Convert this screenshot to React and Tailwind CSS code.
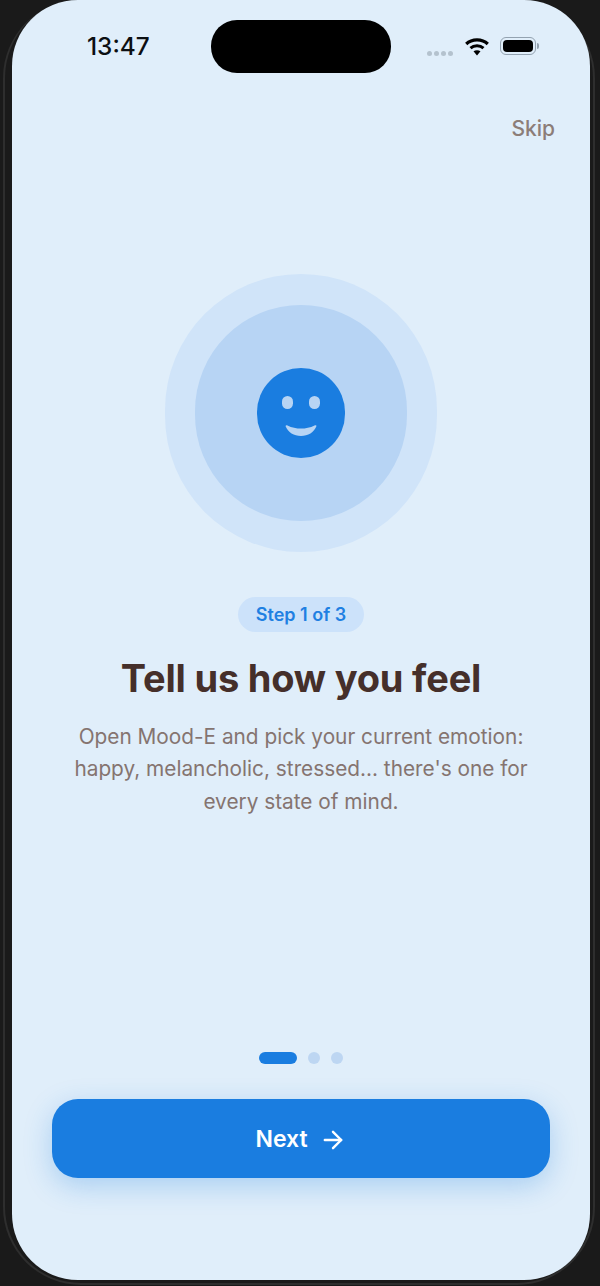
import { ArrowRight } from 'lucide-react';

const App = () => {
  return (
    <div className="w-[600px] h-[1286px] bg-[#1a1a1a] pl-[3px] pr-[5px] pb-[1px] overflow-hidden" style={{ fontFamily: 'Inter, sans-serif' }}>
      {/* Marco del teléfono */}
      <div className="h-full border-l-2 border-r-2 border-b-2 border-[#2e2e2e] rounded-[78px] pl-[7px] pr-[3px] pb-[3px]">
        <div className="h-full bg-[#e0eefa] rounded-[66px] flex flex-col">
          {/* Barra de estado */}
          <div className="h-[93px] shrink-0 flex items-start pt-[20px] pl-[75px]">
            <span className="w-[124px] text-[24.4px] leading-[53px] font-medium text-[#0c0f12]">13:47</span>
            <div className="w-[180px] h-[53px] bg-black rounded-[26px]"></div>
            <div className="h-[53px] flex items-center">
              <div className="ml-[36px] flex gap-[2px] mt-[13px]">
                <span className="w-[5px] h-[5px] rounded-full bg-[#b4c2ce]"></span>
                <span className="w-[5px] h-[5px] rounded-full bg-[#b4c2ce]"></span>
                <span className="w-[5px] h-[5px] rounded-full bg-[#b4c2ce]"></span>
                <span className="w-[5px] h-[5px] rounded-full bg-[#b4c2ce]"></span>
              </div>
              <svg width="24" height="19" viewBox="0 0 24 19" className="ml-[12px] mt-[-1px]">
                <path d="M1.200 7C7 1.500 17 1.500 22.800 7" fill="none" stroke="black" strokeWidth="3.200" />
                <path d="M5.500 11.200C9 8 15 8 18.500 11.200" fill="none" stroke="black" strokeWidth="3" />
                <path d="M8.500 14.200C10.500 12.800 13.500 12.800 15.500 14.200L12 18.500Z" fill="black" />
              </svg>
              <div className="flex items-center ml-[11px] mt-[-1px]">
                <div className="w-[36px] h-[18px] rounded-[6px] border border-[#93a2b0] p-[2px]">
                  <div className="w-full h-full bg-black rounded-[4px]"></div>
                </div>
                <div className="ml-[1px] w-[2px] h-[6px] bg-[#93a2b0] rounded-r-sm"></div>
              </div>
            </div>
          </div>

          {/* Skip */}
          <div className="flex justify-end pr-[35px] mt-[22px]">
            <span className="text-[21px] leading-[28px] font-medium text-[#8c7d78]">Skip</span>
          </div>

          {/* Contenido */}
          <div className="flex flex-col items-center mt-[131px]">
            <div className="w-[272px] h-[278px] rounded-full bg-[#d0e4f9] flex items-center justify-center">
              <div className="w-[212px] h-[216px] rounded-full bg-[#b7d4f4] flex items-center justify-center">
                <div className="w-[88px] h-[90px] rounded-full bg-[#1a7de0] flex flex-col items-center">
                  <div className="flex gap-[16px] mt-[28px]">
                    <span className="w-[11px] h-[13px] rounded-full bg-[#b7d4f4]"></span>
                    <span className="w-[11px] h-[13px] rounded-full bg-[#b7d4f4]"></span>
                  </div>
                  <svg width="34" height="13" viewBox="0 0 34 13" className="mt-[15px]">
                    <path d="M1.500 2C2 1 2.500 1 3.500 1.400C12 5.600 22 5.600 30.500 1.400C31.500 1 32.500 1 32.500 2C30 8.500 24 12 17 12C10 12 4 8.500 1.500 2Z" fill="#b7d4f4" />
                  </svg>
                </div>
              </div>
            </div>

            <div className="mt-[45px] h-[35px] px-[18px] rounded-full bg-[#cce2fa] flex items-center text-[18px] font-semibold text-[#1f80e2]">
              Step 1 of 3
            </div>

            <h1 className="mt-[22px] text-[38px] leading-[48px] font-bold text-[#452f2a] tracking-[-0.2px]">Tell us how you feel</h1>

            <p className="mt-[19px] w-[470px] text-center text-[20.800px] leading-[32.400px] text-[#857470]">
              Open Mood-E and pick your current emotion: happy, melancholic, stressed... there's one for every state of mind.
            </p>
          </div>

          {/* Indicadores y botón */}
          <div className="mt-auto flex flex-col items-center pb-[102px]">
            <div className="flex items-center gap-[11px]">
              <span className="w-[38px] h-[12px] rounded-full bg-[#1a7de0]"></span>
              <span className="w-[12px] h-[12px] rounded-full bg-[#bdd6f2]"></span>
              <span className="w-[12px] h-[12px] rounded-full bg-[#bdd6f2]"></span>
            </div>
            <button className="mt-[35px] w-[498px] h-[79px] pt-[2px] rounded-[26px] bg-[#1a7de0] text-white text-[23px] font-semibold flex items-center justify-center gap-[11px] shadow-[0_8px_28px_rgba(26,125,224,0.28)]">
              Next
              <ArrowRight size={28} strokeWidth={2.1} />
            </button>
          </div>
        </div>
      </div>
    </div>
  );
};

export default App;
